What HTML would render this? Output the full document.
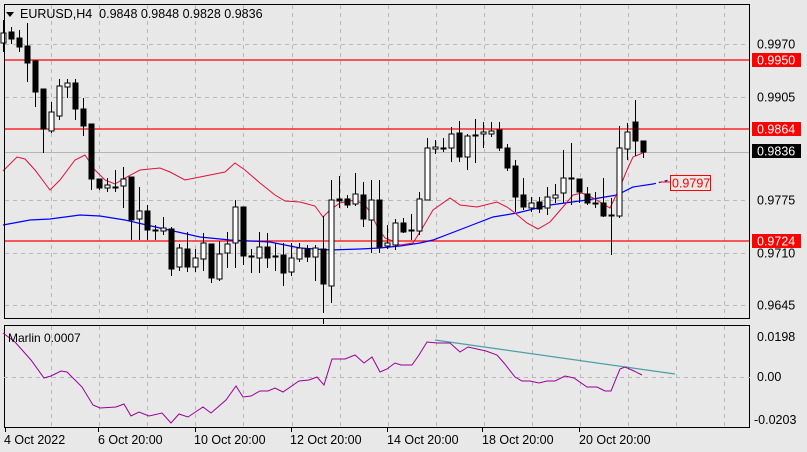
<!DOCTYPE html>
<html><head><meta charset="utf-8"><style>
html,body{margin:0;padding:0;background:#e8e8e8;}
svg{display:block;font-family:"Liberation Sans",sans-serif;}
</style></head><body>
<svg id="s" width="807" height="452" xmlns="http://www.w3.org/2000/svg">
<rect width="807" height="452" fill="#e8e8e8"/>
<g id="grid" stroke="#b8b8b8" stroke-dasharray="4,4" stroke-width="1"></g>
<line x1="4" y1="152.5" x2="750" y2="152.5" stroke="#b4b4b4"/>
<g stroke="#ff0000" stroke-width="1.3">
<line x1="4" y1="60" x2="750" y2="60"/><line x1="4" y1="129" x2="750" y2="129"/><line x1="4" y1="241" x2="750" y2="241"/>
</g>
<polyline fill="none" stroke="#0000ff" stroke-width="1.2" points="3,225 30,220 50,219 80,215 100,216 125,220 160,228 200,237 230,240 270,242 300,248 330,250 360,249 380,248 400,246 420,243 433,240 467,227 493,217 517,213 550,205 587,200 617,195 633,187 653,184"/>
<polyline fill="none" stroke="#0000ff" stroke-width="1.2" stroke-dasharray="3,3" points="653,184 685,176"/>
<polyline fill="none" stroke="#e0103c" stroke-width="1" points="3,171 17,157 25,159 35,170 50,190 60,180 75,160 85,155 95,170 105,180 115,184 125,178 140,170 160,168 170,172 185,180 195,178 210,175 225,172 235,163 245,170 260,183 275,195 285,201 300,202 315,206 323,217 330,210 340,203 355,200 365,205 370,212 378,228 385,238 395,242 400,245 413,243 423,227 433,210 450,198 460,205 477,207 497,202 507,207 515,213 527,223 538,229 550,222 563,207 573,195 582,193 593,198 610,208 620,187 627,170 633,157 645,152"/>
<g id="c"></g>
<line x1="660" y1="182" x2="670" y2="182" stroke="#ff0000"/>
<rect x="670.5" y="175.5" width="40" height="15" fill="#e8e8e8" stroke="#ff0000"/>
<text x="672" y="187.5" font-size="12.5" fill="#ff0000">0.9797</text>
<rect x="4.5" y="4.5" width="745" height="314" fill="none" stroke="#000"/>
<rect x="4.5" y="325.5" width="745" height="102" fill="none" stroke="#000"/>
<line x1="323.5" y1="318" x2="323.5" y2="324" stroke="#000"/>
<line x1="4" y1="377.5" x2="750" y2="377.5" stroke="#b8b8b8" stroke-dasharray="4,4"/>
<polyline fill="none" stroke="#4aa0a0" stroke-width="1.2" points="435,340 675,374"/>
<polyline fill="none" stroke="#990099" stroke-width="1" points="3,333 15,342 31,360 44,378 51,376 61,371 67,372 75,380 82,387 93,405 100,408 116,407 124,404 131,416 139,412 149,416 162,413 171,423 179,414 188,417 203,407 211,413 226,400 236,386 243,397 251,396 260,391 268,391 275,388 283,392 299,381 309,380 317,377 324,385 332,359 345,359 355,355 364,363 372,357 380,372 387,369 395,363 401,365 412,365 419,355 427,342 437,343 450,343 460,352 468,347 486,351 497,355 504,363 515,377 522,381 530,381 539,383 547,381 555,381 565,376 574,378 587,387 597,387 605,391 611,391 620,369 625,367 634,371 642,375"/>
<path d="M6 12 L14 12 L10 17 Z" fill="#000"/>
<text x="20" y="18" font-size="12.5" fill="#000" xml:space="preserve">EURUSD,H4  0.9848 0.9848 0.9828 0.9836</text>
<text x="8" y="342" font-size="12" fill="#000">Marlin 0.0007</text>
<g font-size="12.5" fill="#000">
<text x="757" y="48.5">0.9970</text><text x="757" y="101.5">0.9905</text><text x="757" y="204.5">0.9775</text><text x="757" y="257.5">0.9710</text><text x="757" y="309.5">0.9645</text>
<text x="757" y="341">0.0198</text><text x="757" y="381">0.00</text><text x="754" y="424">-0.0203</text>
</g>
<rect x="752" y="53" width="49" height="14" fill="#ff0000"/><text x="757" y="64.5" font-size="12.5" fill="#fff">0.9950</text>
<rect x="752" y="122" width="49" height="14" fill="#ff0000"/><text x="757" y="133.5" font-size="12.5" fill="#fff">0.9864</text>
<rect x="752" y="144" width="49" height="14" fill="#000"/><text x="757" y="155.5" font-size="12.5" fill="#fff">0.9836</text>
<rect x="752" y="234" width="49" height="14" fill="#ff0000"/><text x="757" y="245.5" font-size="12.5" fill="#fff">0.9724</text>
<g id="ax" stroke="#000"></g>
<g font-size="12.5" fill="#000">
<text x="4" y="444">4 Oct 2022</text><text x="98" y="444">6 Oct 20:00</text><text x="194" y="444">10 Oct 20:00</text><text x="290" y="444">12 Oct 20:00</text><text x="387" y="444">14 Oct 20:00</text><text x="482" y="444">18 Oct 20:00</text><text x="579" y="444">20 Oct 20:00</text>
</g>
</svg>
<script>
var NS="http://www.w3.org/2000/svg";
function el(p,t,a){var e=document.createElementNS(NS,t);for(var k in a)e.setAttribute(k,a[k]);document.getElementById(p).appendChild(e);}
for(var k=0;k<15;k++){var x=Math.round(51+48.1*k)+.5;el("grid","line",{x1:x,y1:5,x2:x,y2:318});el("grid","line",{x1:x,y1:326,x2:x,y2:427});}
[44,97,200,253,305].forEach(function(y){el("grid","line",{x1:5,y1:y+.5,x2:749,y2:y+.5});});
[5,98,195,291,387,482,579].forEach(function(x){el("ax","line",{x1:x+.5,y1:427,x2:x+.5,y2:432});});
var C=[["w",33,43,20,52],["b",32,39,27,44],["b",38,47,30,52],["b",46,63,23,82],["b",61,92,60,107],["b",89,129,89,153],["w",112,131,102,133],["w",86,116,79,120],["w",83,87,79,98],["b",83,109,79,120],
["b",109,126,98,136],["b",124,179,124,190],["b",179,188,179,190],["w",185,188,178,192],["d",187,187,170,192],["w",179,186,167,208],["b",177,220,177,240],["w",211,219,187,240],["b",211,230,205,240],["d",230,230,225,240],
["w",228,231,217,235],["b",229,269,227,276],["w",248,267,244,271],["b",249,267,232,272],["w",258,267,249,272],["w",243,259,233,271],["b",244,278,244,283],["w",254,279,241,281],["w",244,253,232,268],["w",207,243,200,268],
["b",207,256,207,265],["d",256,256,249,273],["w",247,258,232,273],["b",247,258,233,268],["d",256,256,243,271],["b",255,273,243,286],["w",258,272,243,276],["w",248,259,243,262],["b",249,257,245,262],["w",248,257,245,281],
["b",249,284,216,313],["w",200,286,180,303],["b",199,201,176,208],["b",199,205,195,208],["w",194,204,173,206],["b",195,219,182,227],["w",200,220,180,253],["b",200,247,180,253],["w",243,246,225,249],["w",223,245,219,250],
["b",223,232,218,233],["d",230,230,214,240],["w",199,231,192,235],["w",148,200,138,200],["w",147,149,140,154],["d",148,148,138,152],["w",134,148,127,162],["b",133,157,121,162],["w",136,157,134,170],["d",135,135,119,163],
["w",132,134,122,148],["w",131,134,122,137],["b",130,148,122,151],["b",148,168,144,171],["b",166,197,160,212],["b",195,207,178,210],["w",203,208,197,212],["b",202,209,197,213],["w",197,208,187,215],["w",195,198,184,203],
["w",178,193,150,203],["d",178,178,143,205],["b",179,192,179,203],["b",194,203,187,205],["d",203,203,192,208],["b",203,216,178,217],["d",215,215,198,255],["w",148,216,126,218],["w",132,149,123,160],["b",122,141,100,156],["b",141,152,141,158]];
C.forEach(function(c,i){var x=3+8*i+.5;
el("c","line",{x1:x,y1:c[3],x2:x,y2:c[4],stroke:"#000"});
if(c[0]=="d"){el("c","line",{x1:x-3,y1:c[1]+.5,x2:x+3,y2:c[1]+.5,stroke:"#000","stroke-width":2});}
else{var h=Math.max(c[2]-c[1],2);el("c","rect",{x:x-2.5,y:c[1],width:5,height:h,fill:c[0]=="w"?"#fff":"#000",stroke:"#000"});}
});
</script>
</body></html>
